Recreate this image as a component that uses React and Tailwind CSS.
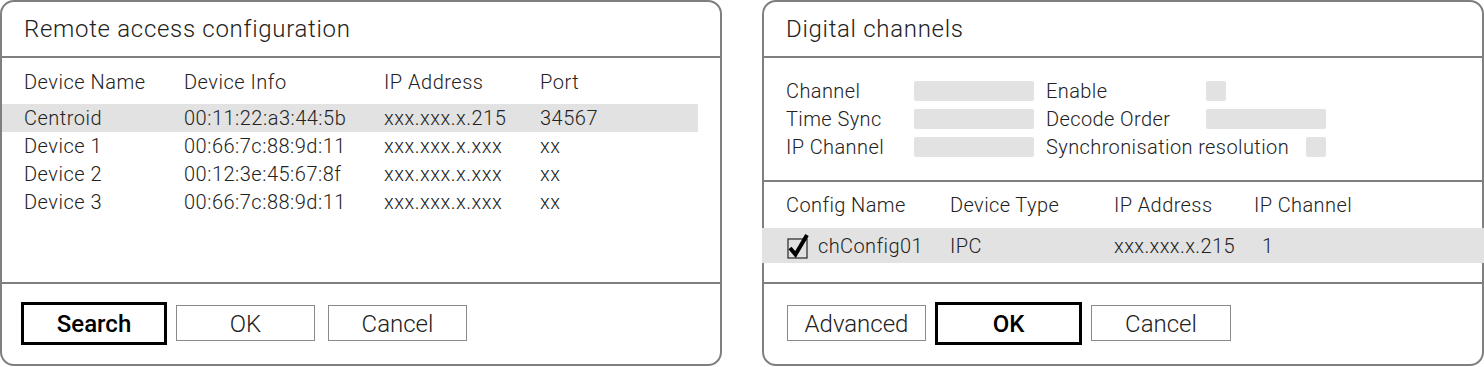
import React from "react";

const font = { fontFamily: "Roboto, 'Noto Sans', sans-serif" };

function Btn({ children, bold, className = "" }) {
  return bold ? (
    <div className={`h-[43px] border-[3px] border-black flex items-center justify-center pt-[2px] text-[24px] font-medium text-black ${className}`}>
      {children}
    </div>
  ) : (
    <div className={`h-[36px] border border-[#8a8a8a] flex items-center justify-center pt-[2px] text-[24px] font-light text-[#222] ${className}`}>
      {children}
    </div>
  );
}

function Bar({ w }) {
  return <div className={`h-[20px] ${w} bg-[#e2e2e2] rounded-[2px]`} />;
}

function CheckIcon() {
  return (
    <svg width="24" height="26" viewBox="0 0 24 26" className="shrink-0">
      <rect x="2" y="6" width="19" height="19" fill="none" stroke="#333" strokeWidth="1.3" />
      <path d="M4 15 L9.5 21.5 L21 2" fill="none" stroke="#000" strokeWidth="4" strokeLinejoin="miter" />
    </svg>
  );
}

export default function App() {
  const rows = [
    ["Centroid", "00:11:22:a3:44:5b", "xxx.xxx.x.215", "34567"],
    ["Device 1", "00:66:7c:88:9d:11", "xxx.xxx.x.xxx", "xx"],
    ["Device 2", "00:12:3e:45:67:8f", "xxx.xxx.x.xxx", "xx"],
    ["Device 3", "00:66:7c:88:9d:11", "xxx.xxx.x.xxx", "xx"],
  ];
  return (
    <div className="w-[1484px] h-[367px] bg-white flex gap-[40px] text-[#222] font-light" style={font}>
      {/* Left panel */}
      <div className="w-[722px] h-[366px] border-2 border-[#7f7f7f] rounded-[14px] flex flex-col">
        <div className="h-[56px] border-b-2 border-[#7f7f7f] flex items-center pl-[22px] pb-[1px] text-[24px] tracking-[0.7px]">
          Remote access configuration
        </div>
        <div className="flex-1 flex flex-col pt-[10px] text-[20px] tracking-[0.5px]">
          <div className="h-[28px] flex items-center pl-[22px]">
            <div className="w-[160px]">Device Name</div>
            <div className="w-[200px]">Device Info</div>
            <div className="w-[156px]">IP Address</div>
            <div>Port</div>
          </div>
          <div className="mt-[8px] flex flex-col">
            {rows.map((r, i) => (
              <div key={i} className={`h-[28px] flex items-center pl-[22px] w-[696px] ${i === 0 ? "bg-[#e2e2e2]" : ""}`}>
                <div className="w-[160px]">{r[0]}</div>
                <div className="w-[200px]">{r[1]}</div>
                <div className="w-[156px]">{r[2]}</div>
                <div>{r[3]}</div>
              </div>
            ))}
          </div>
        </div>
        <div className="h-[82px] border-t-2 border-[#7f7f7f] flex items-center pl-[19px] pb-[2px]">
          <Btn bold className="w-[146px]">Search</Btn>
          <Btn className="w-[139px] ml-[9px]">OK</Btn>
          <Btn className="w-[139px] ml-[13px]">Cancel</Btn>
        </div>
      </div>

      {/* Right panel */}
      <div className="w-[722px] h-[366px] border-2 border-[#7f7f7f] rounded-[14px] flex flex-col">
        <div className="h-[56px] border-b-2 border-[#7f7f7f] flex items-center pl-[22px] pb-[1px] text-[24px] tracking-[0.7px]">
          Digital channels
        </div>
        <div className="h-[124px] border-b-2 border-[#7f7f7f] flex flex-col pt-[19px] pl-[22px] text-[20px] tracking-[0.4px]">
          <div className="h-[28px] flex items-center">
            <div className="w-[128px]">Channel</div>
            <Bar w="w-[120px]" />
            <div className="w-[160px] ml-[12px]">Enable</div>
            <Bar w="w-[20px]" />
          </div>
          <div className="h-[28px] flex items-center">
            <div className="w-[128px]">Time Sync</div>
            <Bar w="w-[120px]" />
            <div className="w-[160px] ml-[12px]">Decode Order</div>
            <Bar w="w-[120px]" />
          </div>
          <div className="h-[28px] flex items-center">
            <div className="w-[128px]">IP Channel</div>
            <Bar w="w-[120px]" />
            <div className="w-[260px] ml-[12px]">Synchronisation resolution</div>
            <Bar w="w-[20px]" />
          </div>
        </div>
        <div className="flex-1 flex flex-col pt-[9px] text-[20px] tracking-[0.4px]">
          <div className="h-[28px] flex items-center pl-[22px]">
            <div className="w-[164px]">Config Name</div>
            <div className="w-[164px]">Device Type</div>
            <div className="w-[140px]">IP Address</div>
            <div>IP Channel</div>
          </div>
          <div className="mt-[9px] -mx-[2px] h-[35px] bg-[#e2e2e2] flex items-center pl-[24px] pt-[1px]">
            <div className="w-[164px] flex items-center gap-[8px]">
              <CheckIcon />
              <span>chConfig01</span>
            </div>
            <div className="w-[164px]">IPC</div>
            <div className="w-[148px]">xxx.xxx.x.215</div>
            <div>1</div>
          </div>
        </div>
        <div className="h-[82px] border-t-2 border-[#7f7f7f] flex items-center pl-[23px] pb-[2px]">
          <Btn className="w-[139px]">Advanced</Btn>
          <Btn bold className="w-[147px] ml-[9px]">OK</Btn>
          <Btn className="w-[140px] ml-[9px]">Cancel</Btn>
        </div>
      </div>
    </div>
  );
}
